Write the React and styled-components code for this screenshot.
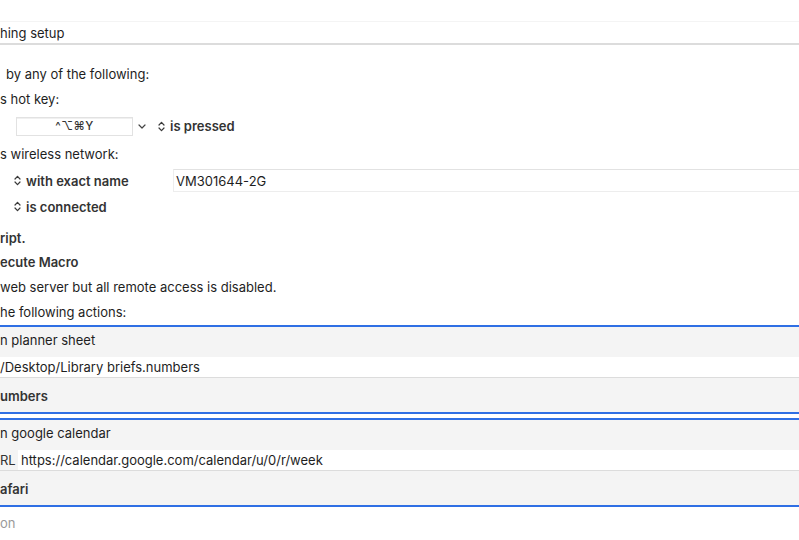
import React from "react";
import styled, { createGlobalStyle } from "styled-components";

const GlobalStyle = createGlobalStyle`
  html, body {
    margin: 0;
    padding: 0;
    background: #ffffff;
  }
  body {
    font-family: Inter, "Liberation Sans", Arial, sans-serif;
    font-size: 13px;
    color: #222;
    -webkit-font-smoothing: antialiased;
  }
`;

const BLUE = "#2f6fe4";
const PANEL = "#f4f4f4";
const RULE = "#dcdcdc";

const UpDown = () => (
  <svg width="7" height="11" viewBox="0 0 7 11" fill="none">
    <path d="M1 4 L3.5 1.3 L6 4" stroke="#3a3a3a" strokeWidth="1.2" strokeLinecap="round" strokeLinejoin="round" />
    <path d="M1 7 L3.5 9.7 L6 7" stroke="#3a3a3a" strokeWidth="1.2" strokeLinecap="round" strokeLinejoin="round" />
  </svg>
);

const ChevronDown = () => (
  <svg width="8" height="5" viewBox="0 0 8 5" fill="none">
    <path d="M1 1 L4 4 L7 1" stroke="#444" strokeWidth="1.2" strokeLinecap="round" strokeLinejoin="round" />
  </svg>
);

const Page = styled.div`
  width: 799px;
  height: 540px;
  overflow: hidden;
  padding-top: 21px;
  box-sizing: border-box;
`;

const NameField = styled.div`
  height: 20px;
  padding-top: 1px;
  display: flex;
  align-items: center;
  border-top: 1px solid #f4f4f4;
  border-bottom: 2px solid ${RULE};
  color: #1e1e1e;
`;

const Trigger = styled.div`
  display: flex;
  flex-direction: column;
  padding-top: 16px;
`;

const Line = styled.div`
  height: ${(p) => p.$h || 25}px;
  margin-top: ${(p) => p.$gap || 0}px;
  padding-left: ${(p) => p.$indent || 0}px;
  display: flex;
  align-items: center;
  font-weight: ${(p) => (p.$bold ? 600 : 400)};
  color: ${(p) => (p.$bold ? "#333" : "#1e1e1e")};
  white-space: nowrap;
`;

const HotKeyBox = styled.div`
  width: 115px;
  height: 17px;
  border: 1px solid #e2e2e2;
  box-shadow: inset 0 1px 0 #f0f0f0;
  display: flex;
  align-items: center;
  justify-content: center;
  font-size: 11.5px;
  font-weight: 500;
  color: #333;
  letter-spacing: 0.5px;
`;

const Popup = styled.div`
  display: flex;
  align-items: center;
  gap: 5px;
  margin-left: ${(p) => p.$offset || 0}px;
  font-weight: 600;
  color: #333;
`;

const Chevron = styled.span`
  display: flex;
  margin-left: 5px;
`;

const ConditionLabel = styled(Popup)`
  width: 159px;
  flex: none;
`;

const TextField = styled.div`
  flex: 1;
  height: 21px;
  margin-right: -4px;
  display: flex;
  align-items: center;
  padding-left: 2px;
  background: #fff;
  border: 1px solid #ededed;
  border-top-color: #e2e2e2;
  color: #1e1e1e;
`;

const Actions = styled.div`
  display: flex;
  flex-direction: column;
  gap: 4px;
`;

const Action = styled.div`
  border-top: 2px solid ${BLUE};
  border-bottom: 2px solid ${BLUE};
  background: ${PANEL};
`;

const ActionTitle = styled.div`
  height: 30px;
  box-sizing: border-box;
  padding-top: 5px;
  line-height: 16px;
  color: #1e1e1e;
  white-space: nowrap;
`;

const ParamRow = styled.div`
  height: 20px;
  display: flex;
  align-items: stretch;
  border-bottom: 1px solid ${RULE};
`;

const ParamLabel = styled.div`
  width: 18px;
  flex: none;
  display: flex;
  align-items: center;
  color: #333;
`;

const ParamValue = styled.div`
  flex: 1;
  display: flex;
  align-items: center;
  padding-left: ${(p) => p.$pad || 0}px;
  background: #fff;
  color: #1e1e1e;
  white-space: nowrap;
`;

const ActionFoot = styled.div`
  height: 34px;
  box-sizing: border-box;
  padding-top: 10px;
  line-height: 16px;
  font-weight: 600;
  color: #333;
`;

const Footer = styled.div`
  margin-top: 8px;
  color: #9a9a9a;
`;

export default function App() {
  return (
    <>
      <GlobalStyle />
      <Page>
        <NameField>hing setup</NameField>

        <Trigger>
          <Line $indent={6}>by any of the following:</Line>
          <Line>s hot key:</Line>
          <Line $h={30} $indent={16}>
            <HotKeyBox>^⌥⌘Y</HotKeyBox>
            <Chevron>
              <ChevronDown />
            </Chevron>
            <Popup $offset={12}>
              <UpDown />
              is pressed
            </Popup>
          </Line>
          <Line $h={26}>s wireless network:</Line>
          <Line $h={27} $indent={14}>
            <ConditionLabel>
              <UpDown />
              with exact name
            </ConditionLabel>
            <TextField>VM301644-2G</TextField>
          </Line>
          <Line $indent={14}>
            <Popup>
              <UpDown />
              is connected
            </Popup>
          </Line>
          <Line $h={24} $gap={7} $bold>
            ript.
          </Line>
          <Line $h={24} $bold>
            ecute Macro
          </Line>
          <Line>web server but all remote access is disabled.</Line>
          <Line $h={26}>he following actions:</Line>
        </Trigger>

        <Actions>
          <Action>
            <ActionTitle>n planner sheet</ActionTitle>
            <ParamRow>
              <ParamValue>/Desktop/Library briefs.numbers</ParamValue>
            </ParamRow>
            <ActionFoot>umbers</ActionFoot>
          </Action>
          <Action>
            <ActionTitle>n google calendar</ActionTitle>
            <ParamRow>
              <ParamLabel>RL</ParamLabel>
              <ParamValue $pad={3}>https://calendar.google.com/calendar/u/0/r/week</ParamValue>
            </ParamRow>
            <ActionFoot>afari</ActionFoot>
          </Action>
        </Actions>

        <Footer>on</Footer>
      </Page>
    </>
  );
}
